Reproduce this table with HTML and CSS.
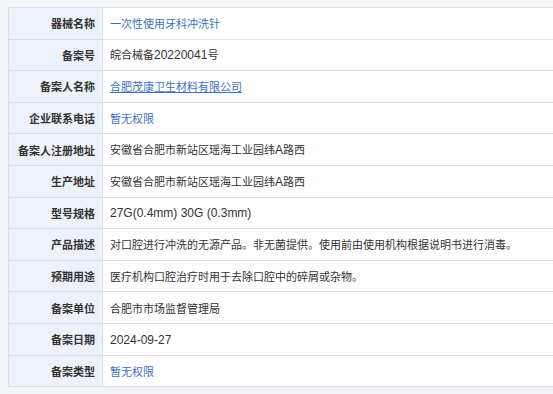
FILE: index.html
```html
<!DOCTYPE html>
<html lang="zh-CN">
<head>
<meta charset="utf-8">
<link rel="stylesheet" href="styles.css">
</head>
<body>
<div class="wrap">
<table class="info">
<tr><th>器械名称</th><td class="blue">一次性使用牙科冲洗针</td></tr>
<tr><th>备案号</th><td>皖合械备<span class="lat">20220041</span>号</td></tr>
<tr><th>备案人名称</th><td><a class="link" href="#">合肥茂康卫生材料有限公司</a></td></tr>
<tr><th>企业联系电话</th><td class="blue">暂无权限</td></tr>
<tr><th>备案人注册地址</th><td>安徽省合肥市新站区瑶海工业园纬<span class="lat">A</span>路西</td></tr>
<tr><th>生产地址</th><td>安徽省合肥市新站区瑶海工业园纬<span class="lat">A</span>路西</td></tr>
<tr><th>型号规格</th><td><span class="lat">27G(0.4mm) 30G (0.3mm)</span></td></tr>
<tr><th>产品描述</th><td>对口腔进行冲洗的无源产品。非无菌提供。使用前由使用机构根据说明书进行消毒。</td></tr>
<tr><th>预期用途</th><td>医疗机构口腔治疗时用于去除口腔中的碎屑或杂物。</td></tr>
<tr><th>备案单位</th><td>合肥市市场监督管理局</td></tr>
<tr><th>备案日期</th><td><span class="lat">2024-09-27</span></td></tr>
<tr><th>备案类型</th><td class="blue">暂无权限</td></tr>
</table>
</div>
</body>
</html>
```
FILE: styles.css
```css
html, body {
  margin: 0;
  background: #f2f4f7;
}
body {
  padding: 7px 0 0 8px;
  font-family: "Noto Sans CJK SC", "Noto Sans", sans-serif;
  font-size: 11px;
  color: #333;
  overflow: hidden;
}
.wrap {
  width: 600px;
}
.info {
  width: 600px;
  border-collapse: collapse;
  background: #fff;
  table-layout: fixed;
}
.info th,
.info td {
  border: 1px solid #dcdfe6;
  height: 31.6px;
  padding: 0 7px 0 7px;
  line-height: 16px;
  box-sizing: border-box;
  vertical-align: middle;
}
.info th {
  width: 94px;
  background: #edf1fa;
  text-align: right;
  font-weight: bold;
  color: #333;
  white-space: nowrap;
}
.info td {
  text-align: left;
  white-space: nowrap;
}
.lat {
  font-family: "Liberation Sans", Arial, sans-serif;
  font-size: 12px;
}
.blue {
  color: #3f6fbf;
}
.link {
  color: #3f6fbf;
  text-decoration: underline;
}
```
